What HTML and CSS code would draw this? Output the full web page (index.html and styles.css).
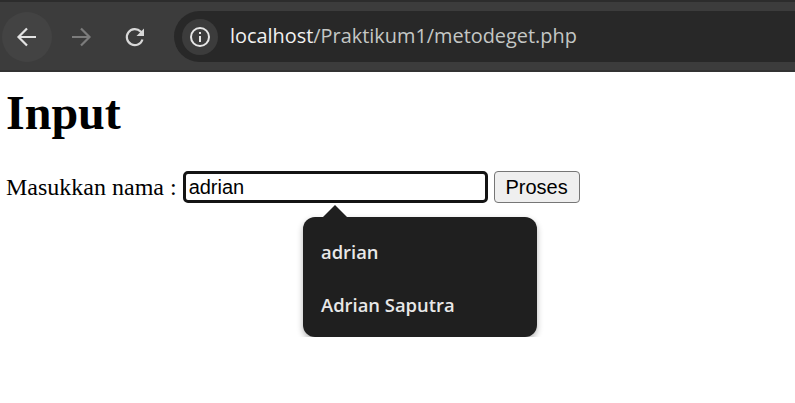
FILE: index.html
```html
<!DOCTYPE html>
<html lang="en">
<head>
  <meta charset="UTF-8">
  <title>Input</title>
  <link rel="stylesheet" href="styles.css">
</head>
<body>
  <nav class="toolbar">
    <span class="nav-btn nav-btn-hover">
      <svg width="24" height="24" viewBox="0 0 24 24" fill="none" stroke="#e3e3e3" stroke-width="2.2"><path d="M21 12H4M12 3.5L3.5 12l8.5 8.5"/></svg>
    </span>
    <span class="nav-btn">
      <svg width="24" height="24" viewBox="0 0 24 24" fill="none" stroke="#7c7c7c" stroke-width="2.2"><path d="M3 12h17M12 3.5l8.5 8.5-8.5 8.5"/></svg>
    </span>
    <span class="nav-btn">
      <svg width="24" height="24" viewBox="0 0 24 24" fill="none" stroke="#d8d8d8" stroke-width="2.2"><path d="M19.5 14.5A8 8 0 1 1 17.6 6.6l1.9 2"/><path d="M21 3.5v7.5h-7.5z" fill="#d8d8d8" stroke="none"/></svg>
    </span>
    <div class="omnibox">
      <span class="site-info">
        <svg width="24" height="24" viewBox="0 0 24 24" fill="none" stroke="#e6e6e6" stroke-width="2"><circle cx="12" cy="12" r="9"/><path d="M12 11v6M12 7v2"/></svg>
      </span>
      <span class="url"><span class="url-host">localhost</span>/Praktikum1/metodeget.php</span>
    </div>
  </nav>

  <main class="page">
    <h1>Input</h1>
    <form class="name-form">
      <label for="nama">Masukkan nama :</label>
      <input type="text" id="nama" class="name-input" value="adrian">
      <button type="button" class="submit-btn">Proses</button>
    </form>
    <ul class="name-list">
      <li class="name-option">adrian</li>
      <li class="name-option">Adrian Saputra</li>
    </ul>
  </main>
</body>
</html>
```

FILE: styles.css
```css
body {
  margin: 0;
  background-color: #fff;
  color: #000;
  font-family: "Liberation Serif", serif;
}

.toolbar {
  display: flex;
  align-items: center;
  height: 72px;
  box-sizing: border-box;
  padding: 1px 0 0 2px;
  gap: 4px;
  background-color: #3c3c3c;
  border-top: 2px solid #2c2c2c;
  border-bottom: 2px solid #333;
}

.nav-btn {
  display: flex;
  align-items: center;
  justify-content: center;
  width: 50px;
  height: 50px;
  border-radius: 50%;
}

.nav-btn-hover {
  background-color: #434343;
}

.omnibox {
  display: flex;
  align-items: center;
  flex: 1;
  height: 51px;
  margin-left: 10px;
  padding-left: 8px;
  background-color: #282828;
  border-radius: 26px 0 0 26px;
}

.site-info {
  display: flex;
  align-items: center;
  justify-content: center;
  width: 36px;
  height: 36px;
  border-radius: 50%;
  background-color: #3c3c3c;
}

.url {
  margin-left: 12px;
  margin-top: -2px;
  font-family: "Open Sans", sans-serif;
  font-size: 19.9px;
  color: #c4c7c5;
}

.url-host {
  color: #f1f1f1;
}

.page {
  padding: 13px 6px 0;
}

h1 {
  margin: 0 0 30px;
  font-size: 48px;
  line-height: 56px;
}

.name-form {
  display: flex;
  align-items: center;
  font-size: 24px;
}

.name-input {
  box-sizing: border-box;
  width: 305px;
  height: 32px;
  margin-left: 6px;
  padding: 0 3px;
  border: 3px solid #141414;
  border-radius: 5px;
  font-family: "Liberation Sans", sans-serif;
  font-size: 20px;
}

.submit-btn {
  box-sizing: border-box;
  width: 86px;
  height: 32px;
  margin-left: 6px;
  padding: 0;
  background-color: #efefef;
  border: 1px solid #767676;
  border-radius: 4px;
  font-family: "Liberation Sans", sans-serif;
  font-size: 20px;
  color: #000;
}

.name-list {
  position: relative;
  box-sizing: border-box;
  width: 234px;
  height: 120px;
  margin: 14px 0 0 297px;
  padding: 8px 0;
  list-style: none;
  background-color: #1f1f1f;
  border-radius: 12px;
  box-shadow: 0 3px 6px rgba(0, 0, 0, 0.3);
}

.name-list::before {
  content: "";
  position: absolute;
  left: 19px;
  top: -12px;
  width: 0;
  height: 0;
  border-left: 13px solid transparent;
  border-right: 13px solid transparent;
  border-bottom: 13px solid #1f1f1f;
}

.name-option {
  padding-left: 18px;
  height: 53px;
  line-height: 53px;
  font-family: "Open Sans", sans-serif;
  font-size: 18.4px;
  font-weight: 600;
  color: #e8e8e8;
}
```
